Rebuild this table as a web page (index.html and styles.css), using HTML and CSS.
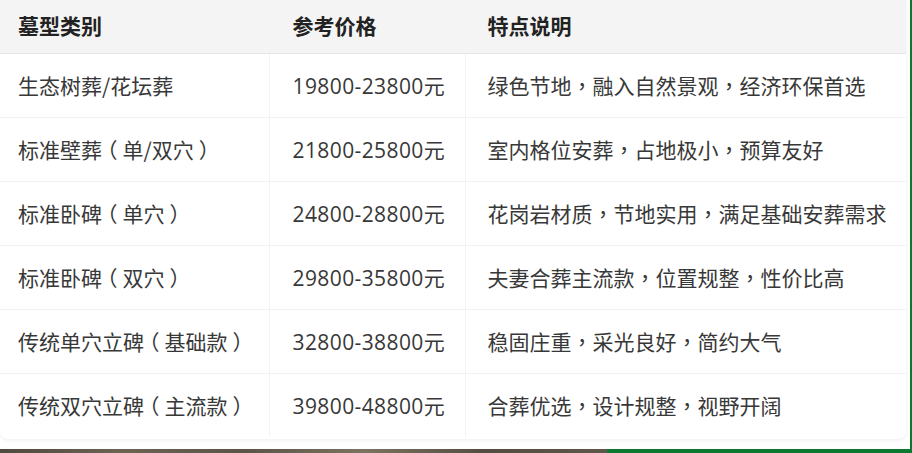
FILE: index.html
```html
<!DOCTYPE html>
<html lang="zh-CN">
<head>
<meta charset="utf-8">
<title>墓型价格</title>
<link rel="stylesheet" href="styles.css">
</head>
<body>
<div class="page">
  <div class="main">
    <div class="card">
      <table class="price-table">
        <colgroup>
          <col class="w1">
          <col class="w2">
          <col class="w3">
        </colgroup>
        <thead>
          <tr>
            <th class="c1">墓型类别</th>
            <th class="c2">参考价格</th>
            <th class="c3">特点说明</th>
          </tr>
        </thead>
        <tbody>
          <tr><td class="c1">生态树葬/花坛葬</td><td class="c2">19800-23800元</td><td class="c3">绿色节地<span class="p" lang="zh-TW">，</span>融入自然景观<span class="p" lang="zh-TW">，</span>经济环保首选</td></tr>
          <tr><td class="c1">标准壁葬<span class="br">（</span>单/双穴<span class="br">）</span></td><td class="c2">21800-25800元</td><td class="c3">室内格位安葬<span class="p" lang="zh-TW">，</span>占地极小<span class="p" lang="zh-TW">，</span>预算友好</td></tr>
          <tr><td class="c1">标准卧碑<span class="br">（</span>单穴<span class="br">）</span></td><td class="c2">24800-28800元</td><td class="c3">花岗岩材质<span class="p" lang="zh-TW">，</span>节地实用<span class="p" lang="zh-TW">，</span>满足基础安葬需求</td></tr>
          <tr><td class="c1">标准卧碑<span class="br">（</span>双穴<span class="br">）</span></td><td class="c2">29800-35800元</td><td class="c3">夫妻合葬主流款<span class="p" lang="zh-TW">，</span>位置规整<span class="p" lang="zh-TW">，</span>性价比高</td></tr>
          <tr><td class="c1">传统单穴立碑<span class="br">（</span>基础款<span class="br">）</span></td><td class="c2">32800-38800元</td><td class="c3">稳固庄重<span class="p" lang="zh-TW">，</span>采光良好<span class="p" lang="zh-TW">，</span>简约大气</td></tr>
          <tr><td class="c1">传统双穴立碑<span class="br">（</span>主流款<span class="br">）</span></td><td class="c2">39800-48800元</td><td class="c3">合葬优选<span class="p" lang="zh-TW">，</span>设计规整<span class="p" lang="zh-TW">，</span>视野开阔</td></tr>
        </tbody>
      </table>
    </div>
  </div>
  <div class="bottom">
    <div class="photo"></div>
    <div class="green"></div>
  </div>
</div>
</body>
</html>
```
FILE: styles.css
```css
html, body {
  margin: 0;
  padding: 0;
  background: #ffffff;
}
body {
  font-family: "Noto Sans CJK SC", "Noto Sans", sans-serif;
  width: 912px;
  height: 453px;
  overflow: hidden;
}
.page {
  display: flex;
  flex-direction: column;
  height: 453px;
}
.main {
  height: 449px;
  display: flex;
  background: #ffffff;
  border-right: 2px solid #0b7a30;
  padding-right: 4px;
}
.card {
  width: 906px;
  height: 439px;
  background: #ffffff;
  border-radius: 0 0 8px 8px;
  box-shadow: 0 1px 4px rgba(0, 0, 0, 0.07);
  overflow: hidden;
}
.price-table {
  width: 906px;
  border-collapse: collapse;
  table-layout: fixed;
  font-size: 21px;
  color: #333333;
}
.w1 { width: 269px; }
.w2 { width: 196px; }
.w3 { width: 441px; }
.price-table th,
.price-table td {
  box-sizing: border-box;
  text-align: left;
  padding: 0 0 0 22px;
  white-space: nowrap;
  border-left: 1px solid #f3f3f3;
}
.price-table .c1 {
  padding-left: 18px;
  border-left: none;
}
.price-table .c2 {
  padding-left: 23px;
  font-family: "Open Sans", "Noto Sans CJK SC", sans-serif;
  letter-spacing: 0.4px;
}
.price-table thead .c2 {
  font-family: "Noto Sans CJK SC", sans-serif;
  letter-spacing: 0;
}
.price-table thead th {
  height: 53px;
  background: #f4f4f4;
  color: #222222;
  font-weight: 700;
  border-bottom: 1px solid #e6e6e6;
  padding-bottom: 3px;
}
.price-table tbody td {
  height: 64px;
  border-bottom: 1px solid #f1f1f1;
  font-weight: 400;
  color: #383838;
}
.price-table tbody tr:last-child td {
  border-bottom: none;
}
.p {
  font-family: "Noto Sans CJK TC", "Noto Sans CJK SC", sans-serif;
}
.br {
  font-feature-settings: "halt" 1;
  padding: 0 5px;
}
.bottom {
  display: flex;
  height: 4px;
}
.photo {
  width: 607px;
  background: linear-gradient(90deg, #4f4a3e 0%, #6b6453 20%, #5a5547 40%, #7a7360 60%, #524d40 80%, #5e584a 100%);
}
.green {
  flex: 1;
  background: #0b7a30;
}
```
